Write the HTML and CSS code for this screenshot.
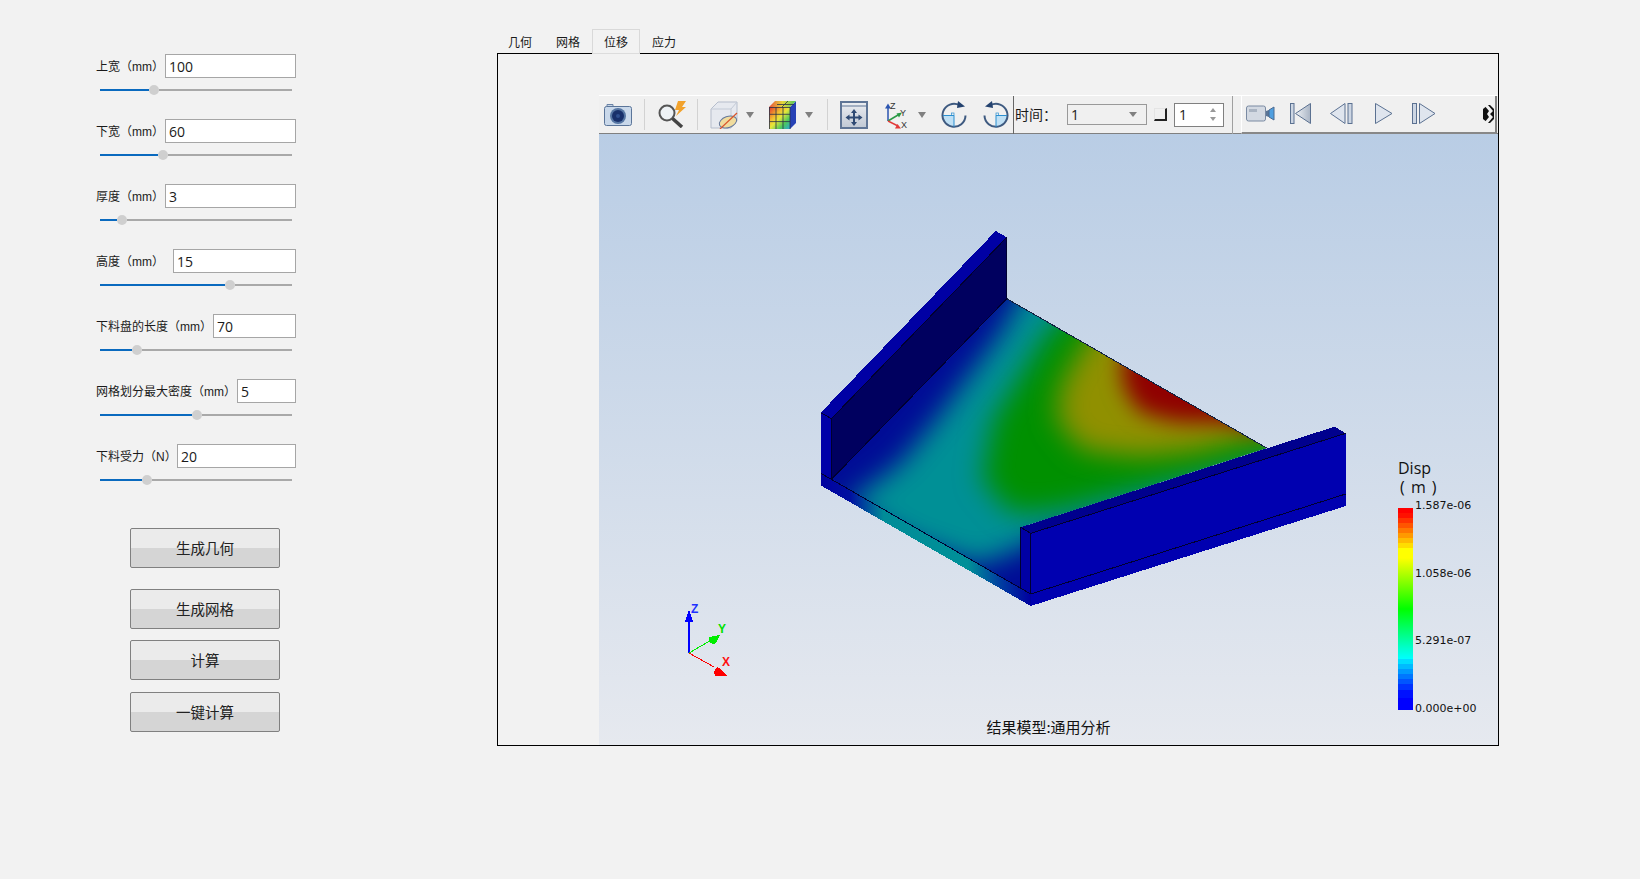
FILE: index.html
```html
<!DOCTYPE html>
<html lang="zh-CN">
<head>
<meta charset="utf-8">
<title>下料盘计算</title>
<link rel="stylesheet" href="styles.css">
</head>
<body>
<main class="app">
  <section class="form">
    <div class="row"><label class="lbl">上宽（mm）</label><input class="num w131" value="100"></div>
    <div class="slider"><i class="fill" style="width:49px"></i><i class="thumb"></i><i class="rest"></i></div>
    <div class="row"><label class="lbl">下宽（mm）</label><input class="num w131" value="60"></div>
    <div class="slider"><i class="fill" style="width:58px"></i><i class="thumb"></i><i class="rest"></i></div>
    <div class="row"><label class="lbl">厚度（mm）</label><input class="num w131" value="3"></div>
    <div class="slider"><i class="fill" style="width:17px"></i><i class="thumb"></i><i class="rest"></i></div>
    <div class="row"><label class="lbl">高度（mm）</label><input class="num w123" value="15"></div>
    <div class="slider"><i class="fill" style="width:125px"></i><i class="thumb"></i><i class="rest"></i></div>
    <div class="row"><label class="lbl">下料盘的长度（mm）</label><input class="num w83" value="70"></div>
    <div class="slider"><i class="fill" style="width:32px"></i><i class="thumb"></i><i class="rest"></i></div>
    <div class="row"><label class="lbl">网格划分最大密度（mm）</label><input class="num w59" value="5"></div>
    <div class="slider"><i class="fill" style="width:92px"></i><i class="thumb"></i><i class="rest"></i></div>
    <div class="row"><label class="lbl">下料受力（N）</label><input class="num w119" value="20"></div>
    <div class="slider"><i class="fill" style="width:42px"></i><i class="thumb"></i><i class="rest"></i></div>
    <div class="actions">
      <button class="btn">生成几何</button>
      <button class="btn gap21">生成网格</button>
      <button class="btn gap11">计算</button>
      <button class="btn gap12">一键计算</button>
    </div>
  </section>

  <section class="pane">
    <nav class="tabs">
      <span class="tab">几何</span><span class="tab">网格</span><span class="tab on">位移</span><span class="tab">应力</span>
    </nav>
    <div class="box">
      <div class="viewer">
        <div class="toolbar">
          <svg class="ic m5" width="28" height="23" viewBox="0 0 28 23"><path d="M3 4V1.5h6V4" fill="#c7d5e6" stroke="#6a83a6"/><rect x=".5" y="3.5" width="27" height="19" rx="2" fill="#c9d8ea" stroke="#5b7599"/><circle cx="14" cy="13" r="8" fill="#5676a3"/><circle cx="14" cy="13" r="6" fill="#18306b"/><circle cx="14" cy="13" r="2" fill="#2f4f8e"/></svg>
          <i class="sep m12"></i>
          <svg class="ic m12" width="29" height="27" viewBox="0 0 29 27"><circle cx="10" cy="12" r="7.5" fill="#eef2f5" stroke="#555" stroke-width="2"/><path d="M15.500 17.500L25 26" stroke="#444" stroke-width="3.500"/><path d="M21 0h8l-4 6h4l-10 9 3-6h-4z" fill="#f2a22c"/></svg>
          <i class="sep m11"></i>
          <svg class="ic m12" width="28" height="28" viewBox="0 0 28 28"><path d="M1 8l7-7h19v19l-6 7H1z" fill="#e6e9ef" stroke="#b5bdcc"/><path d="M1 8h20v19M21 8l6-7" fill="none" stroke="#c3cad6"/><ellipse cx="18" cy="21" rx="9" ry="5.500" transform="rotate(-20 18 21)" fill="#f0dc9e" stroke="#64789c"/><path d="M10 28L27 12" stroke="#d9542b" stroke-width="1.200"/></svg>
          <svg class="ic m8" width="8" height="6" viewBox="0 0 8 6"><path d="M0 0h8L4 6z" fill="#808080"/></svg>
          <svg class="ic m15" width="27" height="28" viewBox="0 0 27 28"><path d="M21 6l6-6v22l-6 6z" fill="#2742b6"/><path d="M0 6l6-6h21l-6 6z" fill="url(#cubeTop)"/><rect y="6" width="21" height="22" fill="url(#cubeFront)"/><path d="M.5 6.500H21M.5 13.300H21M.5 20.600H21M7 6v22M14 6v22M21 6v22M.5 6v22M8 3.500h17M13 6l6-6" stroke="#27304a" stroke-width=".8" fill="none"/></svg>
          <svg class="ic m9" width="8" height="6" viewBox="0 0 8 6"><path d="M0 0h8L4 6z" fill="#808080"/></svg>
          <i class="sep m14"></i>
          <svg class="ic m12" width="28" height="28" viewBox="0 0 28 28"><rect x="1" y="1" width="26" height="26" fill="url(#btnFill)" stroke="#5f7596" stroke-width="2"/><path d="M1 5h26" stroke="#5f7596"/><path d="M14 8l3 4h-2v3.500h3.500v-2l4 3-4 3v-2H15V21h2l-3 4-3-4h2v-3.500H9.500v2l-4-3 4-3v2H13V12h-2z" fill="#2f4a74"/></svg>
          <svg class="ic axes m17" width="26" height="30" viewBox="0 0 26 30"><path d="M3 20V7" stroke="#2b55b0" stroke-width="1.500"/><path d="M3 2.500l3 5H0z" fill="#2b55b0"/><path d="M3 20l10-6" stroke="#2a9a45" stroke-width="1.500"/><path d="M17 11.500l-3 5-2.500-4z" fill="#2a9a45"/><path d="M3 20l10 5" stroke="#e23a3a" stroke-width="1.500"/><path d="M16 27.500l-6 0 2.500-4.500z" fill="#e23a3a"/><text class="axt" x="5" y="8">Z</text><text class="axt" x="15" y="15">Y</text><text class="axt" x="16" y="27">X</text></svg>
          <svg class="ic m7" width="8" height="6" viewBox="0 0 8 6"><path d="M0 0h8L4 6z" fill="#808080"/></svg>
          <svg class="ic m15" width="26" height="27" viewBox="0 0 26 27"><path d="M2 14.500A11 11 0 0 0 13 26V14.500z" fill="#bfe0f5"/><path d="M18.500 4.200A11.500 11.500 0 1 0 24.500 14.500" fill="none" stroke="#3e5a80" stroke-width="2"/><path d="M17 0l7 5.500-8 1.500z" fill="#24426f"/><path d="M2 14.500h11V26" fill="none" stroke="#2b8fd0"/><rect x="10.500" y="12" width="2.500" height="2.500" fill="none" stroke="#2b8fd0" stroke-width=".7"/></svg>
          <svg class="ic flip m16" width="26" height="27" viewBox="0 0 26 27"><path d="M2 14.500A11 11 0 0 0 13 26V14.500z" fill="#bfe0f5"/><path d="M18.500 4.200A11.500 11.500 0 1 0 24.500 14.500" fill="none" stroke="#3e5a80" stroke-width="2"/><path d="M17 0l7 5.500-8 1.500z" fill="#24426f"/><path d="M2 14.500h11V26" fill="none" stroke="#2b8fd0"/><rect x="10.500" y="12" width="2.500" height="2.500" fill="none" stroke="#2b8fd0" stroke-width=".7"/></svg>
          <i class="vline m4"></i>
          <span class="time">时间：</span>
          <div class="combo"><span>1</span><svg width="8" height="5" viewBox="0 0 8 5"><path d="M0 0h8L4 5z" fill="#808080"/></svg></div>
          <i class="corner"></i>
          <div class="spin"><span>1</span><svg width="6" height="13" viewBox="0 0 6 13"><path d="M3 0l3 4H0zM0 9h6l-3 4z" fill="#999"/></svg></div>
          <i class="vline gray"></i>
          <div class="player">
            <svg class="ic" width="29" height="17" viewBox="0 0 29 17"><rect x=".5" y="1" width="19" height="15" rx="2" fill="#d3d9e2" stroke="#7a8aa2"/><rect x="3" y="4" width="8" height="3" fill="#aab4c2"/><path d="M20 6l3-1v7l-3-1z" fill="#5b7596"/><path d="M23 5l5-3v13l-5-3z" fill="#4f9fe0" stroke="#4c6a90"/></svg>
            <svg class="ic m15" width="21" height="21" viewBox="0 0 21 21"><rect x=".5" y=".5" width="3.500" height="20" fill="#cdd6e3" stroke="#5b7191"/><path d="M20.500 .5v20L5.500 10.500z" fill="url(#btnFill2)" stroke="#5b7191"/></svg>
            <svg class="ic m19" width="24" height="21" viewBox="0 0 24 21"><path d="M15 .5v20L.5 10.500z" fill="#dfe5ee" stroke="#5b7191"/><rect x="18" y=".5" width="4" height="20" fill="#cdd6e3" stroke="#5b7191"/></svg>
            <svg class="ic m21" width="18" height="21" viewBox="0 0 18 21"><path d="M.5 .5L17 10.500.5 20.500z" fill="#dfe5ee" stroke="#5b7191"/></svg>
            <svg class="ic m19" width="24" height="21" viewBox="0 0 24 21"><rect x=".5" y=".5" width="4" height="20" fill="#cdd6e3" stroke="#5b7191"/><path d="M7.500 .5L23 10.500 7.500 20.500z" fill="#dfe5ee" stroke="#5b7191"/></svg>
            <svg class="ic more" width="11" height="18" viewBox="0 0 11 18"><path d="M0 4L5 0h2L11 4v10l-4 4H5l-5-4z" fill="#111"/><path d="M1 0h4l5 6-3 3 3 3-5 6H1l5-6-2-3 2-3z" fill="#f0f0f0"/><path d="M0 5l3 4-3 4z" fill="#111"/></svg>
          </div>
        </div>
        <div class="scene">
          <svg class="model" width="899" height="611" viewBox="599 134 899 611">
            <defs>
              <linearGradient id="btnFill" x1="0" y1="0" x2="0" y2="1"><stop offset="0" stop-color="#eceef2"/><stop offset="1" stop-color="#c0c8d4"/></linearGradient>
              <linearGradient id="btnFill2" x1="0" y1="0" x2="1" y2="0"><stop offset="0" stop-color="#eef1f5"/><stop offset="1" stop-color="#a9b4c4"/></linearGradient>
              <linearGradient id="cubeFront" x1="0" y1="0" x2="1" y2="1"><stop offset="0" stop-color="#e22f2f"/><stop offset=".35" stop-color="#f2c02e"/><stop offset=".5" stop-color="#e6e63a"/><stop offset=".75" stop-color="#4cc85c"/><stop offset="1" stop-color="#2aa6d8"/></linearGradient>
              <linearGradient id="cubeTop" x1="0" y1="0" x2="1" y2="0"><stop offset="0" stop-color="#e8503a"/><stop offset=".5" stop-color="#e6d63a"/><stop offset="1" stop-color="#4cc85c"/></linearGradient>
              <linearGradient id="strip" gradientUnits="userSpaceOnUse" x1="58" y1="0" x2="646" y2="0">
                <stop offset="0" stop-color="#0000a0"/><stop offset=".14" stop-color="#0010a0"/><stop offset=".3" stop-color="#008c98"/><stop offset=".7" stop-color="#009098"/><stop offset=".85" stop-color="#0040a0"/><stop offset="1" stop-color="#0000a0"/>
              </linearGradient>
              <clipPath id="floor"><path d="M579 236L1307 684 618 922V1105L88 778z"/></clipPath>
              <filter id="soft" filterUnits="userSpaceOnUse" x="-200" y="0" width="2000" height="1500"><feGaussianBlur stdDeviation="38 40"/></filter>
              <filter id="softer" filterUnits="userSpaceOnUse" x="-200" y="0" width="2000" height="1500"><feGaussianBlur stdDeviation="30 32"/></filter>
            </defs>
            <g transform="translate(800 220) scale(.35714 .33333)">
              <g clip-path="url(#floor)">
                <rect x="0" y="200" width="1400" height="1000" fill="#000c96"/>
                <path filter="url(#soft)" d="M640 180L1600 720 700 940 620 985 500 1035 300 960 130 850 280 730 380 600 560 340z" fill="#009096"/>
                <path filter="url(#soft)" d="M800 230L690 340 540 600 510 780 590 880 720 870 1600 640z" fill="#009000"/>
                <path filter="url(#soft)" d="M860 290L790 380 730 500 720 600 790 690 950 710 1100 695 1260 655 1500 600z" fill="#909000"/>
                <path filter="url(#softer)" d="M900 390L905 500 950 575 1050 605 1200 610 1300 640 1200 400z" fill="#900000"/>
              </g>
              <g shape-rendering="crispEdges">
                <path d="M548 33L579 52 88 596 58 578z" fill="#0000a4"/>
                <path d="M579 52V236L88 778V596z" fill="#00005f"/>
                <path d="M58 578L88 596V778L58 760z" fill="#0000a8"/>
                <path d="M58 760L88 778 618 1105 646 1122V1158L58 796z" fill="url(#strip)"/>
                <path d="M618 922L1497 620 1528 640 646 940z" fill="#00008e"/>
                <path d="M618 922L646 940V1122L618 1105z" fill="#0000a4"/>
                <path d="M646 940L1528 640V858L646 1158z" fill="#0000b0"/>
                <path vector-effect="non-scaling-stroke" d="M88 596L579 52V236L88 778V596L58 578M58 760L88 778 618 1105 646 1122 1528 822M618 922V1105M646 940V1122M646 940L1528 640M618 922L646 940" fill="none" stroke="#000030"/>
                <path vector-effect="non-scaling-stroke" d="M579 236L1307 684" fill="none" stroke="#102040"/>
              </g>
            </g>
            <g shape-rendering="crispEdges">
              <path d="M689 653V618" stroke="#0000ff" stroke-width="1.500"/>
              <path d="M689 609l4 13h-8z" fill="#0000ff"/>
              <path d="M689 653l24-14" stroke="#00ee00"/>
              <path d="M720 635l-3 6-3 3-4-1-1-6z" fill="#00ee00"/>
              <path d="M689 653l25 14" stroke="#ff0000"/>
              <path d="M721 669l6 7h-12l-1-4 3-5z" fill="#ff0000"/>
            </g>
            <text class="zt" x="691" y="613">Z</text>
            <text class="yt" x="718" y="633">Y</text>
            <text class="xt" x="722" y="666">X</text>
          </svg>
          <div class="legend">
            <div class="l-title">Disp<br><span class="unit">( m )</span></div>
            <div class="l-body">
              <div class="bar"></div>
              <div class="l-vals"><span>1.587e-06</span><span>1.058e-06</span><span>5.291e-07</span><span>0.000e+00</span></div>
            </div>
          </div>
          <div class="caption">结果模型:通用分析</div>
        </div>
      </div>
    </div>
  </section>
</main>
</body>
</html>
```
FILE: styles.css
```css
* { box-sizing: border-box; }
html, body { margin: 0; height: 100%; }
body {
  background: #f2f2f2;
  color: #1a1a1a;
  font-family: "Open Sans", "Noto Sans CJK SC", sans-serif;
  overflow: hidden;
}
.app { display: flex; align-items: flex-start; }

/* left form */
.form { width: 200px; margin-left: 96px; padding-top: 54px; }
.row { display: flex; justify-content: space-between; align-items: center; height: 24px; }
.lbl { font: 12px/16px "Liberation Sans", "Noto Sans CJK SC", sans-serif; white-space: nowrap; min-width: 0; flex: 0 1 auto; margin-top: 2px; }
.num {
  height: 24px; flex: none; padding: 0 3px;
  border: 1px solid #a6a6a6; background: #fff; border-radius: 0; outline: 0;
  font: 14px "Open Sans", sans-serif; color: #1a1a1a;
}
.w131 { width: 131px; } .w123 { width: 123px; } .w119 { width: 119px; } .w83 { width: 83px; } .w59 { width: 59px; }
.slider { display: flex; align-items: center; width: 192px; height: 10px; margin: 7px 0 24px 4px; }
.slider i { display: block; flex: none; }
.fill { height: 2px; background: #0a6abf; }
.rest { flex: 1 1 auto !important; height: 2px; background: #a9a9a9; }
.thumb { width: 10px; height: 10px; border-radius: 50%; background: #cfcfcf; }
.actions { display: flex; flex-direction: column; margin: 43px 0 0 34px; }
.btn {
  width: 150px; height: 40px; padding: 0 0 2px; flex: none;
  border: 1px solid #808080; border-radius: 2px;
  background: linear-gradient(#ebebeb 0 50%, #d5d5d5 50% 100%);
  font: 14.500px "Noto Sans CJK SC", sans-serif; color: #222;
}
.gap21 { margin-top: 21px; } .gap11 { margin-top: 11px; } .gap12 { margin-top: 12px; }

/* tabs + box */
.pane { margin-left: 201px; padding-top: 29px; width: 1003px; }
.tabs { display: flex; height: 25px; margin-left: -1px; position: relative; z-index: 1; margin-bottom: -1px; }
.tab { width: 48px; display: flex; align-items: center; justify-content: center; padding-bottom: 1px; font: 12px "Noto Sans CJK SC", sans-serif; border: 1px solid transparent; border-bottom: 0; }
.tab.on { background: #f2f2f2; border-color: #d9d9d9; border-bottom: 1px solid #dcdcdc; }
.box { width: 1002px; height: 693px; border: 1px solid #000; padding: 41px 0 0 101px; }
.viewer { width: 899px; height: 650px; display: flex; flex-direction: column; }

/* toolbar */
.toolbar { display: flex; align-items: center; height: 39px; flex: none; background: #f0f0f0; border-top: 1px solid #fff; border-bottom: 1px solid #808080; }
.ic { flex: none; display: block; }
.axes { margin-bottom: -2px; }
.flip { transform: scaleX(-1); }
.axt { font: 9px "Liberation Sans", sans-serif; fill: #333; }
.sep { flex: none; width: 1px; height: 31px; background: #d2d2d2; }
.vline { flex: none; width: 1px; height: 38px; background: #666; }
.vline.gray { background: #a0a0a0; margin-left: 8px; }
.m4 { margin-left: 4px; } .m5 { margin-left: 5px; } .m7 { margin-left: 7px; } .m8 { margin-left: 8px; } .m9 { margin-left: 9px; }
.m11 { margin-left: 11px; } .m12 { margin-left: 12px; } .m14 { margin-left: 14px; } .m15 { margin-left: 15px; }
.m16 { margin-left: 16px; } .m17 { margin-left: 17px; } .m19 { margin-left: 19px; } .m21 { margin-left: 21px; }
.time { font: 14px/20px "Noto Sans CJK SC", sans-serif; width: 41px; margin-left: 1px; margin-bottom: 2px; flex: none; white-space: nowrap; }
.combo { flex: none; width: 80px; height: 21px; margin-left: 11px; border: 1px solid #999; display: flex; align-items: center; justify-content: space-between; padding: 0 9px 0 3px; font-size: 14px; }
.corner { flex: none; width: 13px; height: 13px; margin-left: 7px; border: 1px solid #e4e4e4; border-right: 2px solid #222; border-bottom: 2px solid #222; }
.spin { flex: none; width: 50px; height: 24px; margin-left: 7px; border: 1px solid #808080; background: #fff; display: flex; align-items: center; justify-content: space-between; padding: 0 7px 0 4px; font-size: 14px; }
.player { flex: none; display: flex; align-items: center; width: 256px; height: 38px; margin-left: 8px; padding-left: 4px; border-left: 1px solid #fff; border-right: 2px solid #808080; border-bottom: 2px solid #888; }
.more { margin-left: 47px; }

/* 3D scene */
.scene { position: relative; flex: 1 1 auto; overflow: hidden; background: linear-gradient(#b9cde5, #e6e9ef); }
.model { position: absolute; left: 0; top: 0; display: block; }
.zt, .yt, .xt { font: bold 12px "Liberation Sans", sans-serif; }
.zt { fill: #2030ff; } .yt { fill: #00e000; } .xt { fill: #ff1010; }
.legend { position: absolute; left: 799px; top: 325px; color: #111; }
.l-title { font: 16px/19px "Open Sans", sans-serif; height: 39px; }
.unit { margin-left: 2px; word-spacing: 2px; }
.l-body { display: flex; }
.bar {
  width: 15px; height: 202px; margin-top: 10px; flex: none;
  background: linear-gradient(to bottom,
    #f00 0 5px, #f10 5px 10px, #f30 10px 15px, #f50 15px 20px, #f70 20px 25px, #f90 25px 30px, #fb0 30px 35px, #fd0 35px 40px, #ff0 40px 50px,
    #0f0 101px, #0fc 140px, #0ff 151px,
    #0df 151px 156px, #0bf 156px 161px, #09f 161px 166px, #07f 166px 171px, #05f 171px 176px, #03f 176px 182px, #01f 182px 190px, #00f 190px 202px);
}
.l-vals { display: flex; flex-direction: column; justify-content: space-between; height: 218px; margin-left: 2px; font: 11px/15px "DejaVu Sans", sans-serif; }
.caption { position: absolute; left: 0; right: 0; bottom: 8px; text-align: center; font: 15px/20px "Noto Sans CJK SC", sans-serif; color: #111; }
```
